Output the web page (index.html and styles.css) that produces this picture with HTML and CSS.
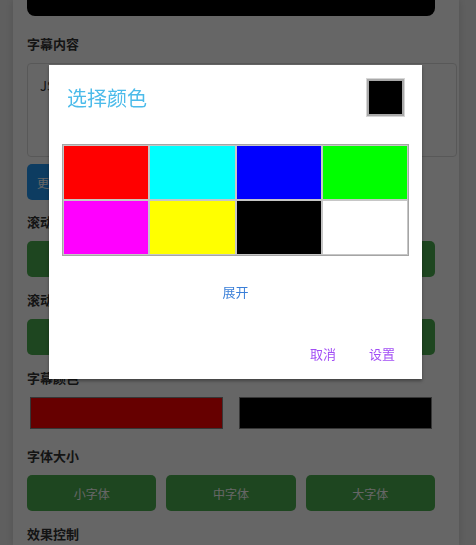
FILE: index.html
```html
<!DOCTYPE html>
<html lang="zh">
<head>
<meta charset="utf-8">
<title>字幕设置</title>
<link rel="stylesheet" href="styles.css">
</head>
<body>
<div class="page">
  <div class="preview"></div>
  <div class="label first">字幕内容</div>
  <div class="textarea">JS</div>
  <div class="row-btn"><button class="btn blue">更新字幕</button></div>
  <div class="label">滚动方向</div>
  <button class="btn green full">向左滚动</button>
  <div class="label">滚动速度</div>
  <button class="btn green full">加快速度</button>
  <div class="label">字幕颜色</div>
  <div class="colors">
    <div class="cbox"><div class="sw red"></div></div>
    <div class="cbox"><div class="sw black"></div></div>
  </div>
  <div class="label">字体大小</div>
  <div class="sizes">
    <button class="btn green">小字体</button>
    <button class="btn green">中字体</button>
    <button class="btn green">大字体</button>
  </div>
  <div class="label">效果控制</div>
</div>

<div class="overlay"></div>

<div class="dialog">
  <div class="d-head">
    <div class="d-title">选择颜色</div>
    <div class="d-current"></div>
  </div>
  <div class="palette">
    <div class="cell c-red"></div>
    <div class="cell c-cyan"></div>
    <div class="cell c-blue"></div>
    <div class="cell c-green"></div>
    <div class="cell c-magenta"></div>
    <div class="cell c-yellow"></div>
    <div class="cell c-black"></div>
    <div class="cell c-white"></div>
  </div>
  <div class="expand">展开</div>
  <div class="actions">
    <span class="act">取消</span>
    <span class="act">设置</span>
  </div>
</div>
</body>
</html>
```

FILE: styles.css
```css
* { box-sizing: border-box; }
html, body {
  margin: 0;
  padding: 0;
  height: 545px;
  overflow: hidden;
}
body {
  background: #eeeeee;
  font-family: "Noto Sans CJK SC", "Noto Sans", sans-serif;
  color: #333;
}
.page {
  display: flow-root;
  margin-left: 13px;
  width: 446px;
  height: 545px;
  background: #ffffff;
  padding: 0 24px 0 14px;
  box-shadow: 0 0 8px rgba(0,0,0,0.15);
}
.preview {
  height: 60px;
  margin-top: -44px;
  background: #000;
  border-radius: 8px;
}
.label {
  font-size: 13px;
  font-weight: 600;
  line-height: 20px;
  height: 20px;
  margin: 13px 0 9px;
  color: #333;
}
.label.first { margin-top: 18px; }
.textarea {
  width: 430px;
  height: 94px;
  border: 1px solid #dcdcdc;
  border-radius: 4px;
  padding: 12px 12px;
  font-size: 13px;
  color: #333;
  line-height: 20px;
}
.row-btn { margin-top: 7px; }
.btn {
  display: block;
  height: 36px;
  border: none;
  border-radius: 5px;
  color: #fff;
  font-family: inherit;
  font-size: 12px;
  padding: 0 10px;
}
.btn.blue { background: #2196f3; }
.btn.green { background: #4caf50; }
.btn.full { width: 100%; }
.row-btn + .label { margin-top: 12px; }
.colors {
  display: grid;
  grid-template-columns: 1fr 1fr;
  gap: 10px;
  height: 32px;
}
.cbox {
  padding: 0 3px;
  height: 32px;
}
.sw { height: 32px; border: 1px solid #888; }
.sw.red { background: #f00; }
.sw.black { background: #000; }
.colors + .label { margin-top: 17px; }
.sizes {
  display: grid;
  grid-template-columns: 1fr 1fr 1fr;
  gap: 10px;
}
.sizes .btn { width: 100%; }

.overlay {
  position: fixed;
  inset: 0;
  background: rgba(0,0,0,0.6);
}
.dialog {
  position: absolute;
  left: 49px;
  top: 65px;
  width: 373px;
  height: 314px;
  background: #fff;
  box-shadow: 0 2px 3px rgba(0,0,0,0.35);
  display: flex;
  flex-direction: column;
}
.d-head {
  display: flex;
  justify-content: space-between;
  align-items: center;
  padding: 14px 18px 0 18px;
}
.d-title {
  font-size: 20px;
  color: #4cbbea;
  line-height: 37px;
}
.d-current {
  width: 37px;
  height: 37px;
  background: #000;
  border: 2px solid #a9a9a9;
  outline: 1px solid #d6d6d6;
}
.palette {
  margin: 28px 13px 0 13px;
  display: grid;
  grid-template-columns: repeat(4, 1fr);
  grid-template-rows: 55px 55px;
  border: 1px solid #a5a5a5;
}
.cell { border: 1px solid #c6c6c6; }
.c-red { background: #ff0000; }
.c-cyan { background: #00ffff; }
.c-blue { background: #0000ff; }
.c-green { background: #00ff00; }
.c-magenta { background: #ff00ff; }
.c-yellow { background: #ffff00; }
.c-black { background: #000000; }
.c-white { background: #ffffff; }
.expand {
  margin-top: 26px;
  text-align: center;
  font-size: 13px;
  line-height: 20px;
  color: #3a7fd8;
}
.actions {
  margin-top: auto;
  display: flex;
  justify-content: flex-end;
  gap: 33px;
  padding: 0 27px 15px 0;
}
.act {
  font-size: 13px;
  line-height: 20px;
  color: #a24ef5;
}
```
